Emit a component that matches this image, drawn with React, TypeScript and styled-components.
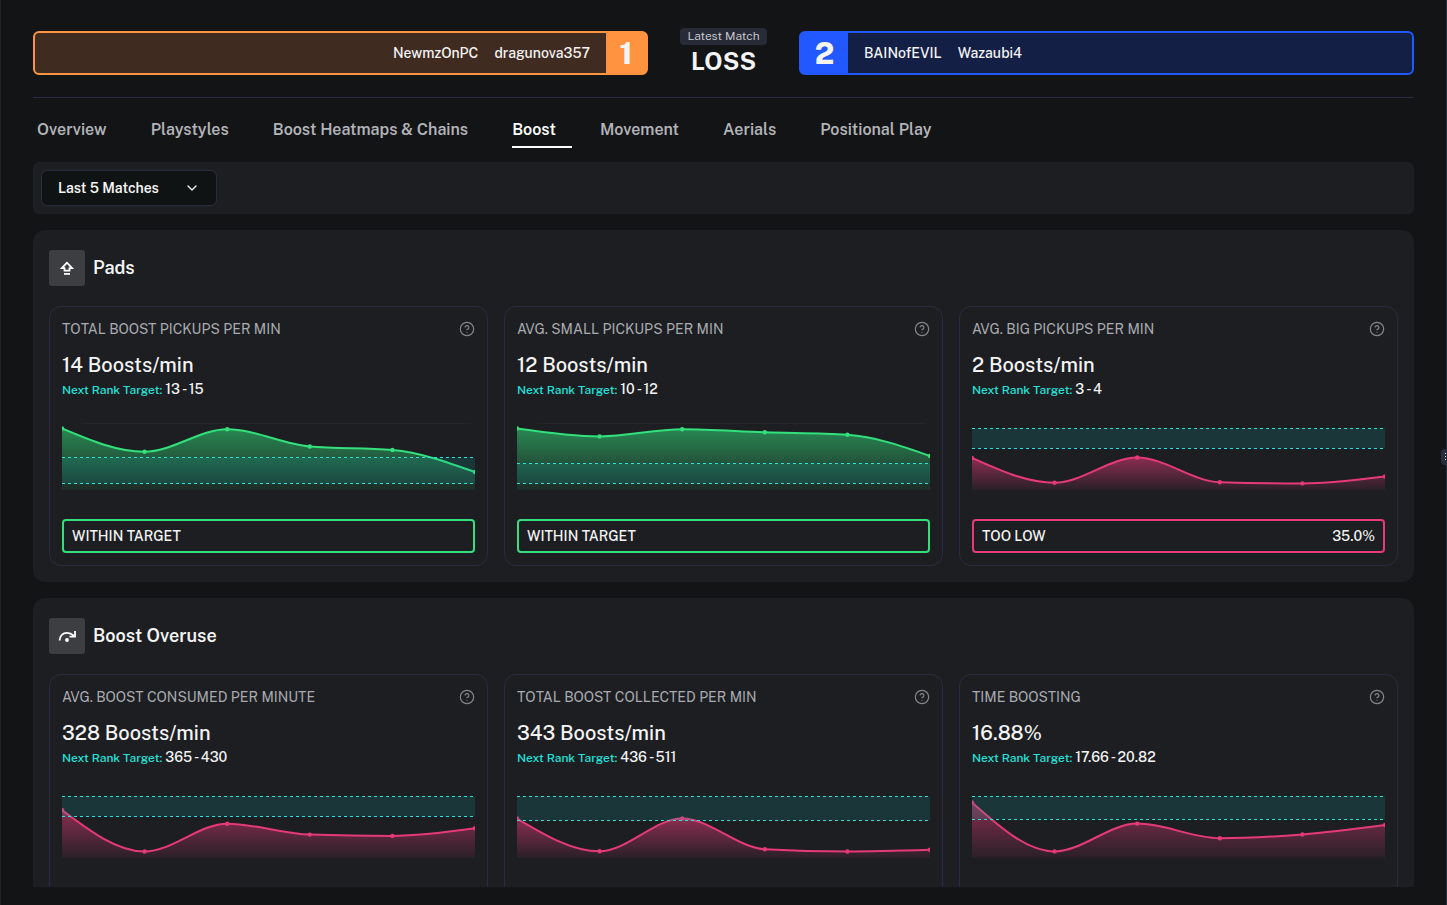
import React, { useId, useLayoutEffect, useRef, useState } from "react";
import styled, { createGlobalStyle, css } from "styled-components";
import { ChevronDown, CircleHelp } from "lucide-react";

const GlobalStyle = createGlobalStyle`
  *, *::before, *::after { box-sizing: border-box; }
  body {
    margin: 0;
    background: #121415;
    color: #f4f4f5;
    font-family: "Public Sans", Inter, "Liberation Sans", sans-serif;
    font-size: 14px;
    line-height: 20px;
  }
  h1, h2, h3, p { margin: 0; font: inherit; }
  button, select { font: inherit; color: inherit; }
`;

const Shell = styled.div`
  position: relative;
  display: flex;
  flex-direction: column;
  height: 100vh;
  overflow: hidden;
  padding: 28px 32px 18px;
  border-left: 1px solid #20222d;
  border-right: 1px solid #20303f;
`;

const MatchHeader = styled.header`
  display: grid;
  grid-template-columns: 1fr auto 1fr;
  gap: 32px;
  align-items: center;
  flex: none;
  padding-bottom: 20px;
  border-bottom: 1px solid #292c40;
`;

type Side = "orange" | "blue";
const sideColors = {
  orange: { line: "#ff9340", fill: "#402b20" },
  blue: { line: "#2158ff", fill: "#141f45" },
};

const Team = styled.div<{ $side: Side }>`
  display: flex;
  flex-direction: ${(p) => (p.$side === "orange" ? "row-reverse" : "row")};
  align-items: stretch;
  height: 44px;
  margin-top: 1px;
  border: 2px solid ${(p) => sideColors[p.$side].line};
  border-radius: 6px;
  background: ${(p) => sideColors[p.$side].fill};
`;

const Score = styled.strong<{ $side: Side }>`
  display: grid;
  place-items: center;
  width: ${(p) => (p.$side === "orange" ? 40 : 47)}px;
  background: ${(p) => sideColors[p.$side].line};
  font-size: 30px;
  line-height: 36px;
  font-weight: 800;
`;

const Players = styled.div`
  display: flex;
  align-items: center;
  gap: 16px;
  padding: 0 16px;
  font-weight: 500;
`;

const Result = styled.div`
  display: flex;
  flex-direction: column;
  align-items: center;
  width: 87px;
`;

const ResultLabel = styled.p`
  align-self: stretch;
  border-radius: 4px;
  background: #272a37;
  color: #d4d4d8;
  font-size: 12px;
  line-height: 17px;
  font-weight: 300;
  text-align: center;
`;

const ResultText = styled.h1`
  font-size: 24px;
  line-height: 32px;
  font-weight: 700;
`;

const Tabs = styled.nav`
  display: flex;
  flex: none;
  gap: 28px;
  padding: 14px 4px 14px;
`;

const Tab = styled.a<{ $active?: boolean }>`
  padding: 7px 16px 5px 0;
  border-bottom: 2px solid transparent;
  color: #b2b3b9;
  font-size: 16px;
  line-height: 22px;
  font-weight: 600;
  white-space: nowrap;
  text-decoration: none;
  ${(p) => p.$active && css`
    color: #fff;
    border-bottom-color: #fff;
  `}
`;

const FilterBar = styled.div`
  flex: none;
  display: flex;
  padding: 8px;
  margin-bottom: 16px;
  border-radius: 6px;
  background: #1d1e21;
`;

const SelectWrap = styled.label`
  position: relative;
  display: block;

  svg {
    position: absolute;
    right: 17px;
    top: 10px;
    pointer-events: none;
  }
`;

const Select = styled.select`
  appearance: none;
  display: block;
  width: 176px;
  height: 36px;
  padding: 0 16px;
  border: 1px solid #292c40;
  border-radius: 6px;
  background: #101314;
  font-weight: 600;
`;

const Scroller = styled.main`
  flex: 1;
  min-height: 0;
  overflow-y: auto;
  scrollbar-width: none;
  display: flex;
  flex-direction: column;
  gap: 16px;
`;

const Panel = styled.section`
  flex: none;
  padding: 20px 16px 16px;
  border-radius: 12px;
  background: #1c1e21;
`;

const PanelHead = styled.div`
  display: flex;
  align-items: center;
  gap: 8px;
  margin-bottom: 20px;
`;

const IconTile = styled.span`
  display: grid;
  place-items: center;
  width: 36px;
  height: 36px;
  border-radius: 3px;
  background: #3d3e42;
`;

const PanelTitle = styled.h2`
  font-size: 18px;
  line-height: 24px;
  font-weight: 600;
`;

const Cards = styled.div`
  display: grid;
  grid-template-columns: repeat(3, minmax(0, 1fr));
  gap: 16px;
`;

const Card = styled.article`
  min-height: 260px;
  padding: 12px;
  border: 1px solid #292c40;
  border-radius: 12px;
`;

const CardHead = styled.div`
  display: flex;
  align-items: center;
  justify-content: space-between;
  margin-bottom: 14px;
`;

const CardTitle = styled.h3`
  color: #a9abb1;
`;

const HelpButton = styled.button`
  display: block;
  padding: 0;
  border: 0;
  background: none;
  color: #85868b;

  svg { display: block; }
`;

const Value = styled.p`
  font-size: 20px;
  line-height: 24px;
  font-weight: 500;
`;

const Target = styled.p`
  display: flex;
  align-items: baseline;
  gap: 3px;
  margin: 2px 0 22px;
  font-weight: 500;
`;

const TargetLabel = styled.span`
  color: #22e3dc;
  font-size: 12px;
`;

const ChartBox = styled.div`
  height: 68px;
  margin-bottom: 29px;
  overflow: hidden;

  svg { display: block; }
`;

type Tone = "good" | "bad";
const toneColors = { good: "#32e07c", bad: "#e63a76" };

const Status = styled.div<{ $tone: Tone }>`
  display: flex;
  justify-content: space-between;
  padding: 5px 8px;
  border: 2px solid ${(p) => toneColors[p.$tone]};
  border-radius: 4px;
  font-weight: 500;
`;

const ResizeHandle = styled.button`
  position: absolute;
  right: -1px;
  top: calc(50% + 4px);
  transform: translateY(-50%);
  width: 6px;
  height: 16px;
  padding: 0;
  border: 0;
  border-radius: 4px 0 0 4px;
  background: #272e3b;

  svg { display: block; }
`;

/** Monotone cubic path through evenly spaced points. */
function curve(ys: number[], step: number): string {
  const n = ys.length;
  const slope = ys.slice(1).map((y, i) => (y - ys[i]) / step);
  const tan = ys.map((_, i) => {
    if (i === 0 || i === n - 1) return 0;
    const a = slope[i - 1];
    const b = slope[i];
    return (Math.sign(a) + Math.sign(b)) * Math.min(Math.abs(a), Math.abs(b), Math.abs(a + b) / 4);
  });
  tan[0] = (3 * slope[0] - tan[1]) / 2;
  tan[n - 1] = (3 * slope[n - 2] - tan[n - 2]) / 2;
  let d = `M0,${ys[0]}`;
  for (let i = 1; i < n; i++) {
    const x0 = (i - 1) * step;
    const x1 = i * step;
    const k = step / 3;
    d += `C${x0 + k},${ys[i - 1] + k * tan[i - 1]},${x1 - k},${ys[i] - k * tan[i]},${x1},${ys[i]}`;
  }
  return d;
}

interface Metric {
  title: string;
  value: string;
  target: string;
  tone: Tone;
  status?: string;
  diff?: string;
  points: number[];
  band: [number, number];
}

function TrendChart({ points, band, tone, label }: Pick<Metric, "points" | "band" | "tone"> & { label: string }) {
  const box = useRef<HTMLDivElement>(null);
  const [width, setWidth] = useState(413);
  const id = useId();
  useLayoutEffect(() => {
    const el = box.current;
    if (!el) return;
    const measure = () => setWidth(el.clientWidth);
    measure();
    const observer = new ResizeObserver(measure);
    observer.observe(el);
    return () => observer.disconnect();
  }, []);
  const color = toneColors[tone];
  const step = width / (points.length - 1);
  const line = curve(points, step);
  const [top, bottom] = band;
  return (
    <ChartBox ref={box}>
      <svg width={width} height={68} role="img" aria-label={label}>
        <defs>
          <linearGradient id={id} x1="0" y1="0" x2="0" y2="1">
            <stop offset="0" stopColor={color} stopOpacity={tone === "good" ? 0.54 : 0.55} />
            <stop offset="1" stopColor={color} stopOpacity="0.07" />
          </linearGradient>
        </defs>
        {tone === "good" && <line x1="20" x2={width - 4} y1="1.5" y2="1.5" stroke="#222428" />}
        <path d={`${line}V68H0Z`} fill={`url(#${id})`} />
        <path d={line} fill="none" stroke={color} strokeWidth="2" />
        {points.map((y, i) => (
          <circle key={i} cx={i * step} cy={y} r="2.2" fill={color} />
        ))}
        <rect x="0" y={top} width={width} height={bottom - top} fill="#12b5b5" fillOpacity="0.16" />
        {band.map((y) => (
          <line key={y} x1="0" x2={width} y1={y} y2={y} stroke="#2ce0dc" strokeDasharray="3 3" />
        ))}
      </svg>
    </ChartBox>
  );
}

function MetricCard({ metric }: { metric: Metric }) {
  return (
    <Card>
      <CardHead>
        <CardTitle>{metric.title}</CardTitle>
        <HelpButton type="button" aria-label={`About ${metric.title}`}>
          <CircleHelp size={16} strokeWidth={1.75} />
        </HelpButton>
      </CardHead>
      <Value>{metric.value}</Value>
      <Target>
        <TargetLabel>Next Rank Target:</TargetLabel>
        <span>{metric.target}</span>
      </Target>
      <TrendChart points={metric.points} band={metric.band} tone={metric.tone} label={`${metric.title} trend`} />
      {metric.status && (
        <Status $tone={metric.tone}>
          <span>{metric.status}</span>
          {metric.diff && <span>{metric.diff}</span>}
        </Status>
      )}
    </Card>
  );
}

const PadIcon = () => (
  <svg width="16" height="16" viewBox="0 0 16 16" fill="none" stroke="#fff" strokeWidth="1.8">
    <path d="M8 2.700 2.900 8.200H5.500v2.500h5V8.200h2.600Z" />
    <path d="M5 13.900h6" />
  </svg>
);

const OveruseIcon = () => (
  <svg width="20" height="20" viewBox="0 0 20 20" fill="none" stroke="#fff" strokeWidth="1.8">
    <path d="M2.600 14.500C3 10 5.800 6.800 9.900 6.800c3 0 5.200 1.300 7.300 3.200" />
    <path d="M18 5v5.600h-5.500" />
    <circle cx="10" cy="14" r="1.900" fill="#fff" stroke="none" />
  </svg>
);

const pads: Metric[] = [
  {
    title: "TOTAL BOOST PICKUPS PER MIN", value: "14 Boosts/min", target: "13 - 15",
    tone: "good", status: "WITHIN TARGET",
    points: [6.5, 29.8, 7.2, 24.5, 28, 50], band: [35.5, 61.5],
  },
  {
    title: "AVG. SMALL PICKUPS PER MIN", value: "12 Boosts/min", target: "10 - 12",
    tone: "good", status: "WITHIN TARGET",
    points: [6.5, 14.4, 7.2, 10.3, 12.8, 34], band: [41.5, 61.5],
  },
  {
    title: "AVG. BIG PICKUPS PER MIN", value: "2 Boosts/min", target: "3 - 4",
    tone: "bad", status: "TOO LOW", diff: "35.0%",
    points: [36, 60.7, 35.5, 60.2, 61.4, 54.5], band: [6.5, 26.5],
  },
];

const overuse: Metric[] = [
  {
    title: "AVG. BOOST CONSUMED PER MINUTE", value: "328 Boosts/min", target: "365 - 430",
    tone: "bad",
    points: [20, 61.5, 33.7, 44.6, 45.9, 38.3], band: [6.5, 26.5],
  },
  {
    title: "TOTAL BOOST COLLECTED PER MIN", value: "343 Boosts/min", target: "436 - 511",
    tone: "bad",
    points: [28.5, 61.3, 28.5, 59.2, 61.5, 59.8], band: [6.5, 30.5],
  },
  {
    title: "TIME BOOSTING", value: "16.88%", target: "17.66 - 20.82",
    tone: "bad",
    points: [12.5, 61.4, 33.6, 48.2, 44.4, 35], band: [6.5, 29.5],
  },
];

const tabs = ["Overview", "Playstyles", "Boost Heatmaps & Chains", "Boost", "Movement", "Aerials", "Positional Play"];

export default function App() {
  return (
    <Shell>
      <GlobalStyle />
      <MatchHeader>
        <Team $side="orange">
          <Score $side="orange">1</Score>
          <Players><span>NewmzOnPC</span><span>dragunova357</span></Players>
        </Team>
        <Result>
          <ResultLabel>Latest Match</ResultLabel>
          <ResultText>LOSS</ResultText>
        </Result>
        <Team $side="blue">
          <Score $side="blue">2</Score>
          <Players><span>BAINofEVIL</span><span>Wazaubi4</span></Players>
        </Team>
      </MatchHeader>
      <Tabs>
        {tabs.map((name) => (
          <Tab key={name} href="#" $active={name === "Boost"} aria-current={name === "Boost" ? "page" : undefined}>
            {name}
          </Tab>
        ))}
      </Tabs>
      <FilterBar>
        <SelectWrap>
          <Select aria-label="Match range" defaultValue="5">
            <option value="5">Last 5 Matches</option>
          </Select>
          <ChevronDown size={16} />
        </SelectWrap>
      </FilterBar>
      <Scroller>
        <Panel>
          <PanelHead>
            <IconTile><PadIcon /></IconTile>
            <PanelTitle>Pads</PanelTitle>
          </PanelHead>
          <Cards>{pads.map((m) => <MetricCard key={m.title} metric={m} />)}</Cards>
        </Panel>
        <Panel>
          <PanelHead>
            <IconTile><OveruseIcon /></IconTile>
            <PanelTitle>Boost Overuse</PanelTitle>
          </PanelHead>
          <Cards>{overuse.map((m) => <MetricCard key={m.title} metric={m} />)}</Cards>
        </Panel>
      </Scroller>
      <ResizeHandle type="button" aria-label="Resize panel">
        <svg width="6" height="16" viewBox="0 0 6 16" fill="#e4e4e7">
          <path d="M4 4h1v1H4zM4 7h1v1H4zM4 10h1v1H4z" />
        </svg>
      </ResizeHandle>
    </Shell>
  );
}
